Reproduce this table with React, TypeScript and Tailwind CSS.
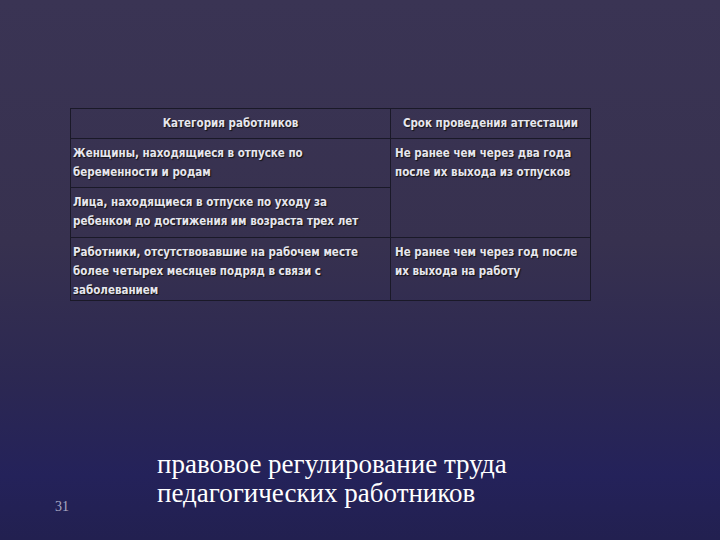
const rowText = "text-[11.5px] font-bold leading-[19px] text-[#e6e6ee] [text-shadow:1px_1px_1px_#111]";

export default function App() {
  return (
    <div className="flex h-[540px] w-[720px] flex-col overflow-hidden bg-[linear-gradient(to_bottom,#3a3454_0%,#37314f_45%,#2c2852_70%,#24225a_88%,#222050_100%)] font-['DejaVu_Sans_Condensed',sans-serif]">
      <div className="ml-[70px] mt-[108px]">
        <table className="w-[520px] table-fixed border-collapse">
          <colgroup>
            <col className="w-[320px]" />
            <col className="w-[200px]" />
          </colgroup>
          <tbody>
            <tr className="h-[30px]">
              <td className={`border border-[#1a1928] text-center align-middle ${rowText}`}>Категория работников</td>
              <td className={`border border-[#1a1928] text-center align-middle ${rowText}`}>Срок проведения аттестации</td>
            </tr>
            <tr className="h-[49px]">
              <td className={`border border-[#1a1928] px-[2px] pt-[5px] align-top ${rowText}`}>
                Женщины, находящиеся в отпуске по
                <br />
                беременности и родам
              </td>
              <td rowSpan={2} className={`border border-[#1a1928] px-[4px] pt-[5px] align-top ${rowText}`}>
                Не ранее чем через два года
                <br />
                после их выхода из отпусков
              </td>
            </tr>
            <tr className="h-[50px]">
              <td className={`border border-[#1a1928] px-[2px] pt-[5px] align-top ${rowText}`}>
                Лица, находящиеся в отпуске по уходу за
                <br />
                ребенком до достижения им возраста трех лет
              </td>
            </tr>
            <tr className="h-[63px]">
              <td className={`border border-[#1a1928] px-[2px] pt-[5px] align-top ${rowText}`}>
                Работники, отсутствовавшие на рабочем месте
                <br />
                более четырех месяцев подряд в связи с
                <br />
                заболеванием
              </td>
              <td className={`border border-[#1a1928] px-[4px] pt-[5px] align-top ${rowText}`}>
                Не ранее чем через год после
                <br />
                их выхода на работу
              </td>
            </tr>
          </tbody>
        </table>
      </div>

      <div className="mt-auto flex items-start pb-[23px] pl-[55px]">
        <div className="mt-[47px] w-[102px] font-['Liberation_Serif',serif] text-[14px] leading-[20px] text-[#a9a9c4]">31</div>
        <div className="font-['Liberation_Serif',serif] text-[27px] leading-[29px] text-white">
          правовое регулирование труда
          <br />
          педагогических работников
        </div>
      </div>
    </div>
  );
}
